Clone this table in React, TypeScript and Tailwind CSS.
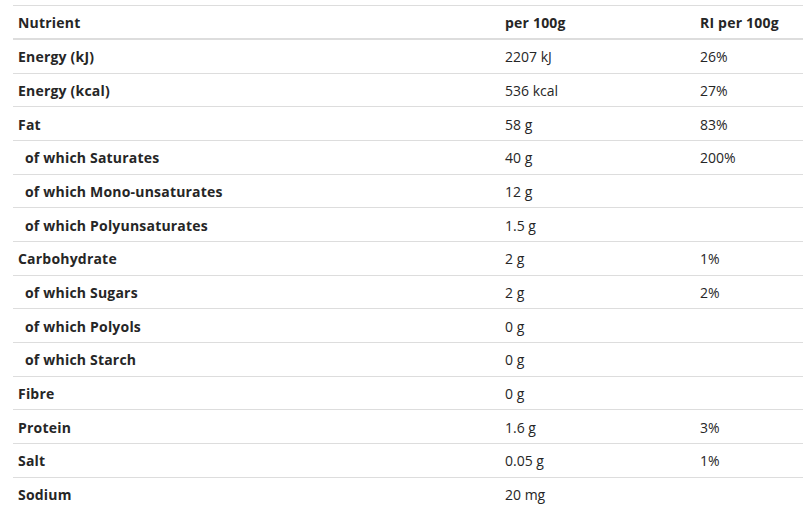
const rows: { name: string; sub?: boolean; per: string; ri?: string }[] = [
  { name: 'Energy (kJ)', per: '2207 kJ', ri: '26%' },
  { name: 'Energy (kcal)', per: '536 kcal', ri: '27%' },
  { name: 'Fat', per: '58 g', ri: '83%' },
  { name: 'of which Saturates', sub: true, per: '40 g', ri: '200%' },
  { name: 'of which Mono-unsaturates', sub: true, per: '12 g' },
  { name: 'of which Polyunsaturates', sub: true, per: '1.5 g' },
  { name: 'Carbohydrate', per: '2 g', ri: '1%' },
  { name: 'of which Sugars', sub: true, per: '2 g', ri: '2%' },
  { name: 'of which Polyols', sub: true, per: '0 g' },
  { name: 'of which Starch', sub: true, per: '0 g' },
  { name: 'Fibre', per: '0 g' },
  { name: 'Protein', per: '1.6 g', ri: '3%' },
  { name: 'Salt', per: '0.05 g', ri: '1%' },
  { name: 'Sodium', per: '20 mg' },
];

export default function App() {
  return (
    <div className="min-h-[520px] bg-white pt-[5px] pl-[13px] text-[14px] text-[#262626] [font-family:'Open_Sans',sans-serif]">
      <div className="w-[790px]">
        {/* Header */}
        <div className="flex h-[35px] items-center border-t border-b-2 border-[#ddd] font-bold tracking-[0.2px]">
          <div className="w-[487px] pl-[5px]">Nutrient</div>
          <div className="w-[195px] pl-[5px]">per 100g</div>
          <div className="flex-1 pl-[5px]">RI per 100g</div>
        </div>
        {rows.map((r, i) => (
          <div
            key={r.name}
            className={
              'flex h-[33.67px] items-center pt-px ' +
              (i < rows.length - 1 ? 'border-b border-[#ddd]' : '')
            }
          >
            <div className={'w-[487px] font-bold tracking-[0.2px] ' + (r.sub ? 'pl-[12px]' : 'pl-[5px]')}>{r.name}</div>
            <div className="w-[195px] pl-[5px]">{r.per}</div>
            <div className="flex-1 pl-[5px]">{r.ri ?? ''}</div>
          </div>
        ))}
      </div>
    </div>
  );
}
